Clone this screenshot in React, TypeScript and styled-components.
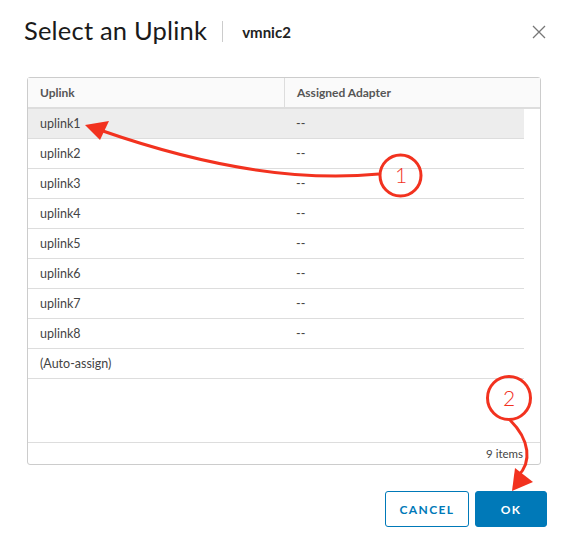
import styled, { createGlobalStyle } from 'styled-components';

const GlobalStyle = createGlobalStyle`
  body {
    margin: 0;
    font-family: Lato, "Noto Sans", sans-serif;
    color: #333;
    background: #fff;
  }
`;

const uplinks = ['uplink1', 'uplink2', 'uplink3', 'uplink4', 'uplink5', 'uplink6', 'uplink7', 'uplink8'];

function App() {
  return (
    <Modal>
      <GlobalStyle />
      <Header>
        <Title>Select an Uplink</Title>
        <Divider />
        <SubTitle>vmnic2</SubTitle>
        <CloseButton aria-label="close">
          <svg width="16" height="16" viewBox="0 0 16 16">
            <path d="M2 2 L14 14 M14 2 L2 14" stroke="#777" strokeWidth="1.3" fill="none" />
          </svg>
        </CloseButton>
      </Header>

      <Body>
        <Grid>
          <HeadRow>
            <HeadCell>Uplink</HeadCell>
            <HeadCell $divider>Assigned Adapter</HeadCell>
          </HeadRow>
          <RowArea>
            {uplinks.map((u, i) => (
              <Row key={u} $selected={i === 0}>
                <Cell>{u}</Cell>
                <Cell>--</Cell>
              </Row>
            ))}
            <Row>
              <Cell>(Auto-assign)</Cell>
              <Cell />
            </Row>
          </RowArea>
          <Footer>9 items</Footer>
        </Grid>
      </Body>

      <Actions>
        <Button $width={84}>CANCEL</Button>
        <Button $width={72} $primary>OK</Button>
      </Actions>

      {/* callouts drawn over the dialog */}
      <Callouts width="565" height="544" viewBox="0 0 565 544">
        <g stroke="#f2321f" strokeWidth="3" fill="none">
          <path d="M379 174 Q260 186 100 130" />
          <circle cx="400.5" cy="175.5" r="20.5" />
          <path d="M510 420 C530 440 532 462 518 476" />
          <circle cx="509" cy="398" r="21.5" />
        </g>
        <g fill="#f2321f">
          <polygon points="85,125 109,121 100,140" />
          <polygon points="512,491 533,482 515,468" />
        </g>
        <CalloutNum x="401" y="183">1</CalloutNum>
        <CalloutNum x="509" y="406">2</CalloutNum>
      </Callouts>
    </Modal>
  );
}

const Modal = styled.div`
  position: relative;
  width: 565px;
  height: 544px;
  overflow: hidden;
`;

const Header = styled.div`
  display: flex;
  align-items: center;
  height: 36px;
  padding: 13px 18px 0 24px;
`;

const Title = styled.h1`
  margin: 0;
  font-size: 25.5px;
  font-weight: 400;
  color: #1a1a1a;
  letter-spacing: 0.2px;
  margin-top: -2px;
`;

const Divider = styled.span`
  width: 1px;
  height: 21px;
  background: #ccc;
  margin: 0 19px 0 15px;
`;

const SubTitle = styled.span`
  font-size: 15px;
  font-weight: 700;
  color: #222;
  margin-top: 1px;
`;

const CloseButton = styled.button`
  margin-left: auto;
  border: 0;
  background: none;
  padding: 0;
  display: flex;
  width: 16px;
  height: 16px;
  margin-top: 2px;
`;

const Body = styled.div`
  padding: 28px 24px 0 27px;
`;

const Grid = styled.div`
  width: 512px;
  border: 1px solid #ccc;
  border-radius: 3px;
  display: flex;
  flex-direction: column;
`;

const HeadRow = styled.div`
  display: grid;
  grid-template-columns: 256px 1fr;
  height: 29px;
  background: #fafafa;
  border-bottom: 2px solid #ddd;
`;

const HeadCell = styled.div<{ $divider?: boolean }>`
  display: flex;
  align-items: center;
  padding-left: 12px;
  font-size: 12px;
  font-weight: 700;
  color: #565656;
  border-left: ${(p) => (p.$divider ? '1px solid #ddd' : '0')};
`;

const RowArea = styled.div`
  height: 333px;
  padding-right: 16px;
`;

const Row = styled.div<{ $selected?: boolean }>`
  display: grid;
  grid-template-columns: 256px 1fr;
  height: 29px;
  border-bottom: 1px solid #ddd;
  background: ${(p) => (p.$selected ? '#ededed' : '#fff')};
`;

const Cell = styled.div`
  display: flex;
  align-items: center;
  padding-left: 12px;
  font-size: 12.5px;
  color: #444;
`;

const Footer = styled.div`
  height: 21px;
  border-top: 1px solid #ddd;
  display: flex;
  align-items: center;
  justify-content: flex-end;
  padding-right: 17px;
  font-size: 11.5px;
  color: #444;
`;

const Actions = styled.div`
  display: flex;
  justify-content: flex-end;
  gap: 6px;
  padding: 26px 18px 0 0;
`;

const Button = styled.button<{ $primary?: boolean; $width: number }>`
  width: ${(p) => p.$width}px;
  height: 36px;
  padding: 0;
  border-radius: 3px;
  border: 1px solid #0079b8;
  background: ${(p) => (p.$primary ? '#0079b8' : '#fff')};
  color: ${(p) => (p.$primary ? '#fff' : '#0079b8')};
  font-family: Lato, "Noto Sans", sans-serif;
  font-size: 12px;
  font-weight: 700;
  letter-spacing: 1.4px;
`;

const Callouts = styled.svg`
  position: absolute;
  left: 0;
  top: 0;
  pointer-events: none;
`;

const CalloutNum = styled.text`
  font-family: Lato, "Noto Sans", sans-serif;
  font-size: 21px;
  font-weight: 300;
  fill: #f2321f;
  text-anchor: middle;
`;

export default App;
